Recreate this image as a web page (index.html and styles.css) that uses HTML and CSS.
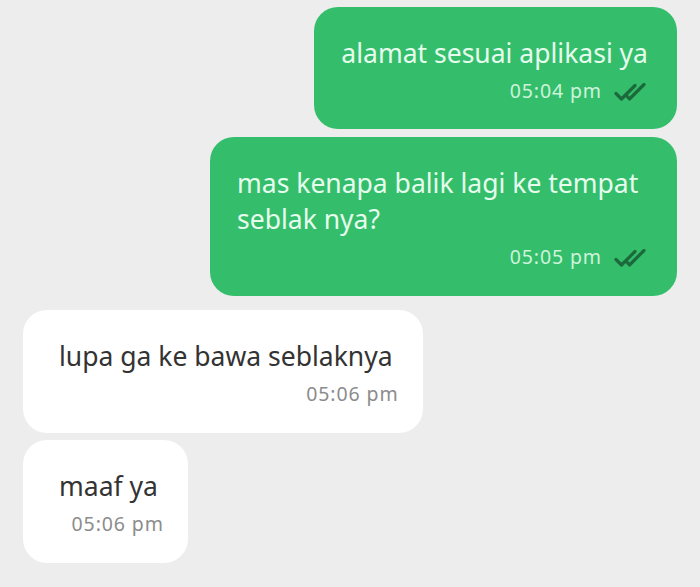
FILE: index.html
```html
<!DOCTYPE html>
<html lang="id">
<head>
<meta charset="utf-8">
<title>Chat</title>
<link rel="stylesheet" href="styles.css">
</head>
<body>
<main class="chat">
  <div class="bubble out b1">
    <p class="text">alamat sesuai aplikasi ya</p>
    <div class="meta"><span class="time">05:04 pm</span>
      <svg class="ticks" viewBox="0 0 32 18" width="32" height="18"><path d="M2 10.5 L7.5 16 L21 2.5 M12 12 L15.5 16 L30 1.5" fill="none" stroke="#1c6a3b" stroke-width="3.2" stroke-linecap="round" stroke-linejoin="round"/></svg>
    </div>
  </div>
  <div class="bubble out b2">
    <p class="text">mas kenapa balik lagi ke tempat seblak nya?</p>
    <div class="meta"><span class="time">05:05 pm</span>
      <svg class="ticks" viewBox="0 0 32 18" width="32" height="18"><path d="M2 10.5 L7.5 16 L21 2.5 M12 12 L15.5 16 L30 1.5" fill="none" stroke="#1c6a3b" stroke-width="3.2" stroke-linecap="round" stroke-linejoin="round"/></svg>
    </div>
  </div>
  <div class="bubble in b3">
    <p class="text">lupa ga ke bawa seblaknya</p>
    <div class="meta"><span class="time">05:06 pm</span></div>
  </div>
  <div class="bubble in b4">
    <p class="text">maaf ya</p>
    <div class="meta"><span class="time">05:06 pm</span></div>
  </div>
</main>
</body>
</html>
```

FILE: styles.css
```css
html, body {
  margin: 0;
  padding: 0;
  background: #ededed;
}
body {
  font-family: "Noto Sans", "Open Sans", sans-serif;
  width: 700px;
  height: 587px;
  overflow: hidden;
}
.chat {
  display: flex;
  flex-direction: column;
  padding: 7px 23px 0 23px;
}
.bubble {
  border-radius: 24px;
  box-sizing: border-box;
  max-width: 467px;
  padding: 28px 29px 27px 27px;
}
.bubble .text {
  margin: 0;
  font-size: 26.5px;
  line-height: 36px;
}
.meta {
  display: flex;
  justify-content: flex-end;
  align-items: center;
  gap: 12px;
  margin-top: 8px;
  height: 24px;
}
.time {
  font-size: 19.5px;
  letter-spacing: 0.9px;
  line-height: 24px;
}
.out {
  align-self: flex-end;
  background: #34be6c;
  color: #e6fcec;
}
.out .meta {
  padding-right: 2px;
}
.out .time {
  color: #cdf3da;
}
.ticks {
  display: block;
  margin-top: 1px;
}
.in {
  align-self: flex-start;
  background: #ffffff;
  color: #333333;
  padding-left: 36px;
  padding-right: 30px;
}
.in .meta {
  margin-right: -6px;
}
.in .time {
  color: #8c8c8c;
}
.b1 { padding-bottom: 26px; }
.b2 { margin-top: 8px; }
.b3 { margin-top: 14px; }
.b4 { margin-top: 7px; }
```
